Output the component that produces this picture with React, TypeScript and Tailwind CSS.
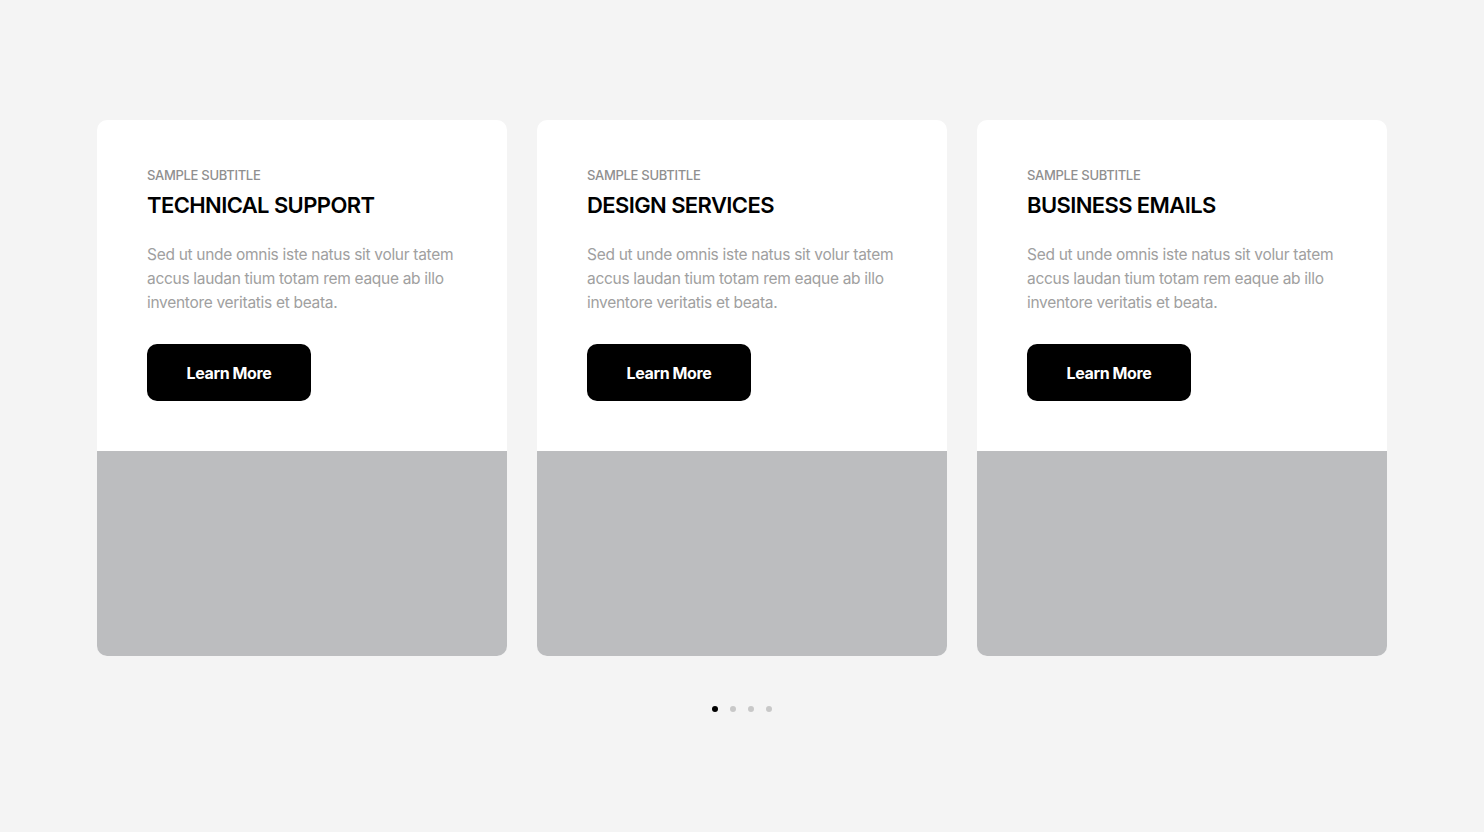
import React from "react";

const cards = [
  { title: "TECHNICAL SUPPORT" },
  { title: "DESIGN SERVICES" },
  { title: "BUSINESS EMAILS" },
];

export default function App() {
  return (
    <div
      className="w-full min-h-[832px] bg-[#f4f4f4] flex flex-col items-center pt-[120px]"
      style={{ fontFamily: "Inter, 'Noto Sans', sans-serif" }}
    >
      <div className="flex gap-[30px]">
        {cards.map((c) => (
          <div key={c.title} className="w-[410px] h-[536px] rounded-[10px] overflow-hidden bg-white flex flex-col">
            <div className="h-[331px] pl-[50px] pr-[40px] pt-[46px]">
              <div className="text-[13px] leading-[18px] text-[#8f8f8f] font-medium tracking-[-0.3px]">SAMPLE SUBTITLE</div>
              <div className="mt-[7px] text-[22px] leading-[28px] font-semibold text-black tracking-[-0.6px]">{c.title}</div>
              <p className="mt-[24px] text-[15.5px] leading-[24px] text-[#a0a0a0] tracking-[-0.3px]">
                Sed ut unde omnis iste natus sit volur tatem accus laudan tium totam rem eaque ab illo inventore veritatis et beata.
              </p>
              <button className="mt-[29px] w-[164px] h-[57px] rounded-[10px] bg-black text-white text-[16px] font-bold tracking-[-0.4px]">
                Learn More
              </button>
            </div>
            <div className="flex-1 bg-[#bcbdbf]" />
          </div>
        ))}
      </div>
      <div className="mt-[50px] flex gap-[12px] items-center">
        <span className="w-[6px] h-[6px] rounded-full bg-black" />
        <span className="w-[6px] h-[6px] rounded-full bg-[#c8c8c8]" />
        <span className="w-[6px] h-[6px] rounded-full bg-[#c8c8c8]" />
        <span className="w-[6px] h-[6px] rounded-full bg-[#c8c8c8]" />
      </div>
    </div>
  );
}
